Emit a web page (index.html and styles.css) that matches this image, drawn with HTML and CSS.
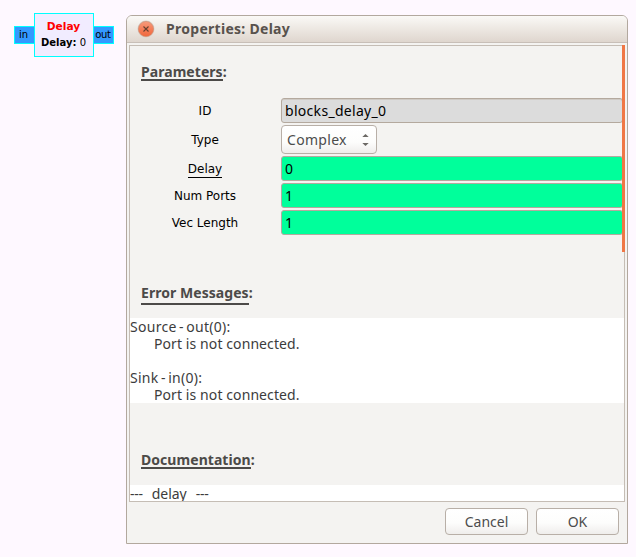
FILE: index.html
```html
<!DOCTYPE html>
<html lang="en">
<head>
<meta charset="utf-8">
<title>Properties: Delay</title>
<link rel="stylesheet" href="styles.css">
</head>
<body>
<main class="workspace">
  <section class="block">
    <div class="port">in</div>
    <div class="block-body"><strong class="block-name">Delay</strong><div><b>Delay:</b> 0</div></div>
    <div class="port">out</div>
  </section>
  <section class="dialog">
    <header class="titlebar">
      <svg class="close" width="18" height="18" viewBox="0 0 18 18">
        <defs><linearGradient id="g" x1="0" y1="0" x2="0" y2="1"><stop offset="0" stop-color="#f69b7c"/><stop offset=".5" stop-color="#f47e59"/><stop offset="1" stop-color="#f0683c"/></linearGradient></defs>
        <circle cx="9" cy="9" r="8.5" fill="#d9cdc4"/>
        <circle cx="9" cy="9" r="7.6" fill="url(#g)" stroke="#d08a6d" stroke-width=".6"/>
        <path d="M6.5 6.5l5 5M11.5 6.5l-5 5" stroke="#65402f" stroke-width="1.1"/>
      </svg>
      <h1 class="title">Properties: Delay</h1>
    </header>
    <div class="pane">
      <h2 class="heading parameters"><span>Parameters</span>:</h2>
      <div class="form">
        <label>ID</label><div class="field disabled">blocks_delay_0</div>
        <label>Type</label>
        <div class="select"><span>Complex</span><svg width="7" height="14" viewBox="0 0 7 14"><path d="M0.3 4L3.5 1L6.7 4zM0.3 10L3.5 13L6.7 10z" fill="#6c6965"/></svg></div>
        <label><span class="underlined">Delay</span></label><div class="field">0</div>
        <label>Num Ports</label><div class="field">1</div>
        <label>Vec Length</label><div class="field">1</div>
      </div>
      <h2 class="heading errors"><span>Error Messages</span>:</h2>
      <div class="text messages">
        <div class="source">Source - out(0):</div>
        <div class="detail">Port is not connected.</div>
        <div class="source sink">Sink - in(0):</div>
        <div class="detail">Port is not connected.</div>
      </div>
      <h2 class="heading documentation"><span>Documentation</span>:</h2>
      <div class="text docs"><span class="dashes">---</span><span class="doc-name">delay</span><span class="dashes">---</span></div>
      <div class="scrollbar"></div>
    </div>
    <footer class="actions"><button class="cancel">Cancel</button><button class="ok">OK</button></footer>
  </section>
</main>
</body>
</html>
```
FILE: styles.css
```css
* { box-sizing: border-box; }
body { margin: 0; background: #fef8ff; color: #3c3c3c; font-family: "Noto Sans", sans-serif; font-size: 14px; }
.workspace { display: flex; align-items: flex-start; gap: 12px; width: 636px; height: 557px; padding: 13px 8px 0 14px; overflow: hidden; }
.block { display: flex; align-items: center; height: 44px; color: #000; font: 10.67px/16px "DejaVu Sans", sans-serif; }
.port { width: 22px; height: 18px; border: 1px solid #0ff; background: #3399ff; text-align: center; line-height: 15px; margin-right: -1px; font-size: 10px; white-space: nowrap; letter-spacing: -.1px; }
.port:last-child { margin: 0 0 0 -1px; width: 21px; padding-right: 1px; letter-spacing: -.3px; }
.port:first-child { width: 21px; padding-right: 2px; }
.block-body { width: 60px; height: 44px; border: 1px solid #0ff; background: #f1ecff; text-align: center; padding: 4px 1px 0 0; font-size: 10px; white-space: nowrap; }
.block-name { color: #f00; font-size: 10.67px; display: block; height: 17px; padding-top: 1px; }
.dialog { display: flex; flex-direction: column; width: 502px; height: 529px; margin-top: 2px; border: 1px solid #b2a89e; border-radius: 6px 6px 0 0; background: #f4f3f1; overflow: hidden; }
.titlebar { display: flex; align-items: center; height: 27px; padding-left: 10px; gap: 11px; border-bottom: 1px solid #c8bfb8; background: linear-gradient(#faf9f6, #dfd6ce); }
.title { margin: 0; color: #58524d; font-size: 14px; line-height: 26px; letter-spacing: .28px; }
.pane { position: relative; width: 496px; height: 457px; margin: 2px 0 0 2px; border: 1px solid #c5bdb5; }
.heading { margin: 0 0 0 11px; color: #4c4a48; font-size: 14px; line-height: 18px; height: 18px; white-space: nowrap; letter-spacing: .05px; }
.heading span { display: inline-block; height: 18px; border-bottom: 2px solid #4c4a48; }
.parameters { margin-top: 17px; }
.form { display: grid; grid-template-columns: 150px 344px; grid-template-rows: 25px 29px 25px 25px 25px; row-gap: 2px; margin-top: 17px; color: #000; }
.form label { align-self: center; text-align: center; font: 12px/18px "DejaVu Sans", sans-serif; }
.underlined { display: inline-block; height: 18px; border-bottom: 1px solid #000; }
.field { margin-left: 1px; margin-right: 1px; padding-left: 3px; border: 1px solid #b4a99e; border-radius: 3px; background: #00ff9b; line-height: 24px; letter-spacing: .3px; }
.disabled { background: #dcdcdc; box-shadow: inset 0 1px #cfcac5; }
.select { display: flex; align-items: center; justify-content: space-between; width: 96px; margin-left: 1px; padding: 0 7px 0 5px; border: 1px solid #b8afa7; border-radius: 4px; background: linear-gradient(#fff, #fdfdfc 60%, #efedeb); color: #4c4c4c; letter-spacing: .3px; }
.errors { margin-top: 49px; }
.errors span { height: 21px; }
.text { background: #fff; line-height: 17px; white-space: nowrap; }
.messages { height: 85px; margin-top: 16px; }
.source { letter-spacing: .28px; word-spacing: -1.5px; }
.detail { padding-left: 24px; letter-spacing: .09px; }
.sink { margin-top: 17px; }
.documentation { margin-top: 48px; }
.docs { height: 16px; margin-top: 16px; display: flex; gap: 9px; overflow: hidden; }
.dashes { letter-spacing: -.3px; }
.scrollbar { position: absolute; top: -1px; right: -1px; width: 3px; height: 207px; background: #f07746; }
.actions { display: flex; justify-content: flex-end; gap: 8px; padding: 6px 8px 0 0; }
button { width: 83px; height: 27px; padding: 0; border: 1px solid #b8afa7; border-radius: 4px; background: linear-gradient(#fff, #fdfdfc 55%, #efedeb); color: #4c4c4c; font: 14px/25px "Noto Sans", sans-serif; }
```
